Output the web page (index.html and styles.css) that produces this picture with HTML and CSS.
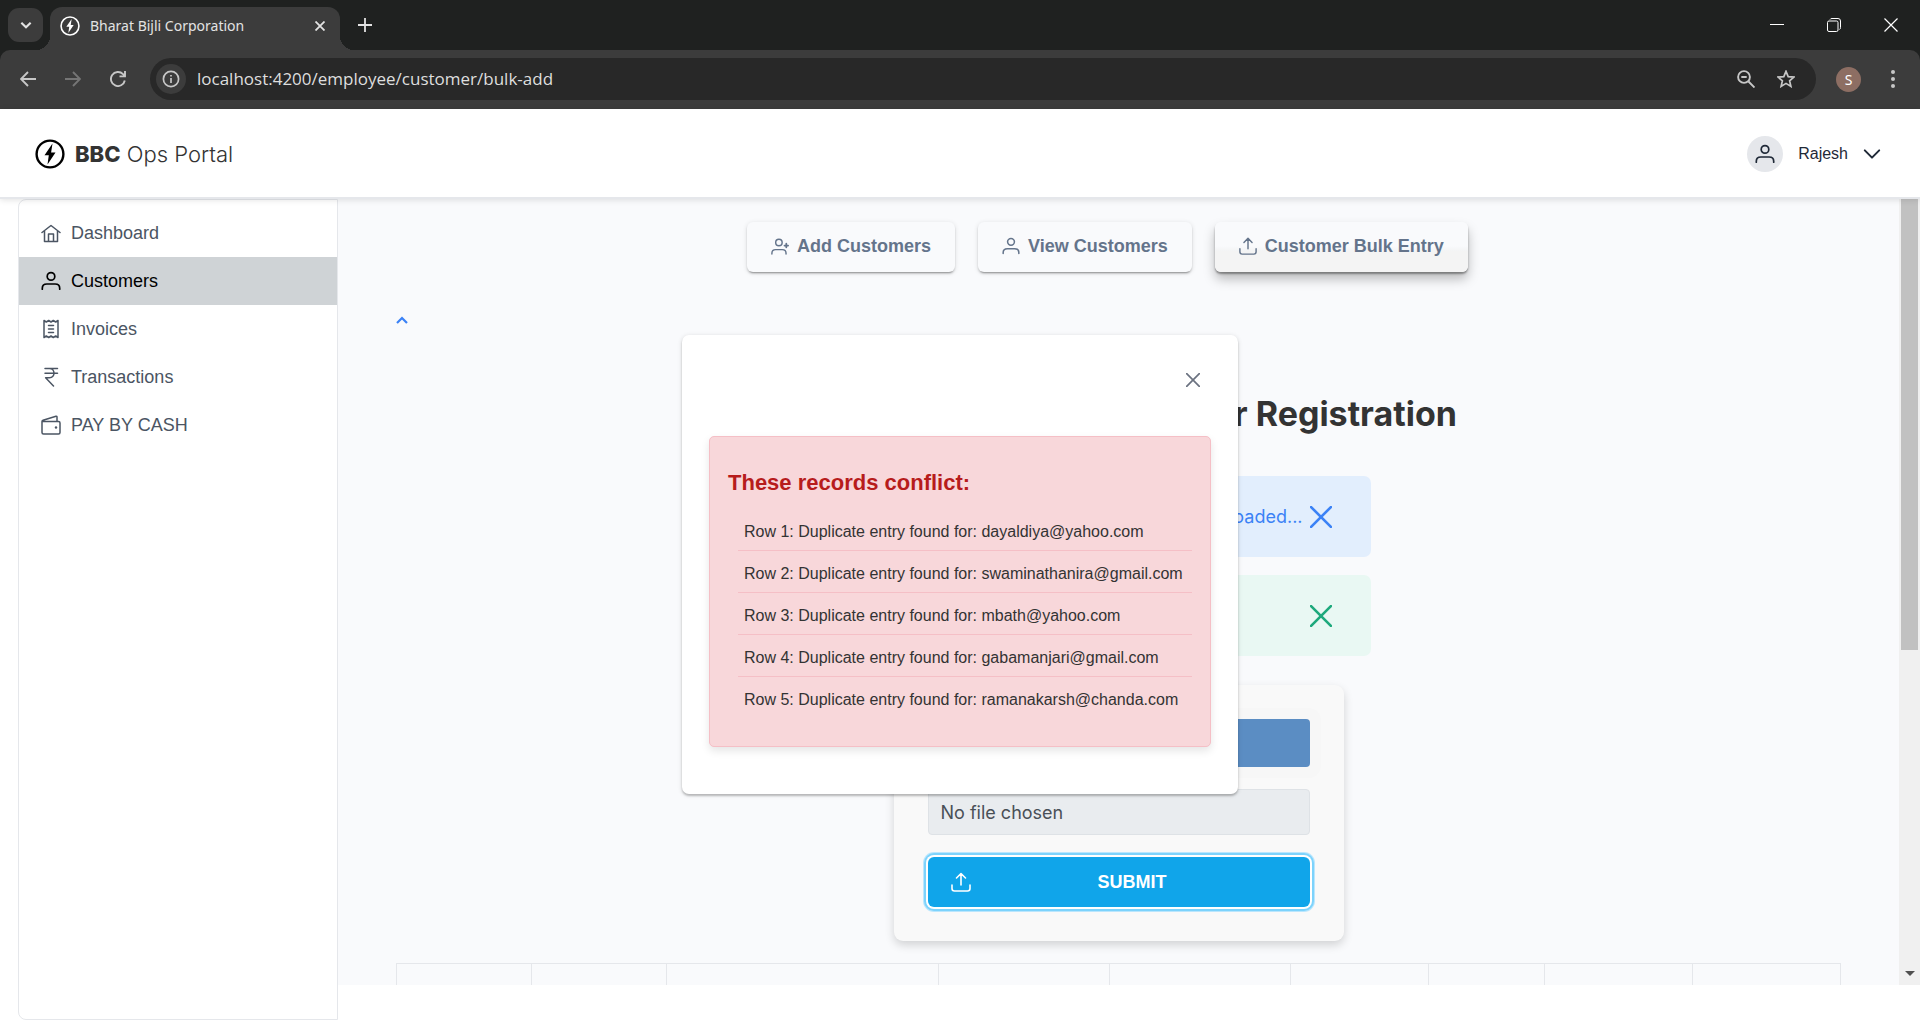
FILE: index.html
```html
<!DOCTYPE html>
<html lang="en">
<head>
<meta charset="utf-8">
<meta name="viewport" content="width=device-width, initial-scale=1">
<title>Bharat Bijli Corporation</title>
<link rel="stylesheet" href="styles.css">
</head>
<body>
<svg class="sprite" aria-hidden="true">
  <symbol id="bolt" viewBox="0 0 30 30"><circle cx="15" cy="15" r="13.4" fill="none" stroke="currentColor" stroke-width="2.4"/><path d="M17.500 4.500 9.500 16.200h4.300l-1.300 9.300L20.500 13.500h-4.400z" fill="currentColor"/></symbol>
  <symbol id="user" viewBox="0 0 20 20"><g fill="none" stroke="currentColor" stroke-width="1.700" stroke-linecap="round"><circle cx="10" cy="5.400" r="3.800"/><path d="M1.300 18.200v-1c0-2.600 2-4.200 4.600-4.200h8.200c2.600 0 4.600 1.600 4.600 4.200v1"/></g></symbol>
  <symbol id="user-plus" viewBox="0 0 20 20"><g fill="none" stroke="currentColor" stroke-width="1.600" stroke-linecap="round"><circle cx="8.800" cy="6.200" r="3.600"/><path d="M1 19v-1c0-2.500 1.800-4 4.200-4h7.300c2.400 0 4.200 1.500 4.200 4v1"/><path d="M17 7.500v4M15 9.500h4" stroke-width="2"/></g></symbol>
  <symbol id="upload" viewBox="0 0 20 20"><path d="M1 13v3.500C1 18 2 19 3.500 19h13c1.500 0 2.500-1 2.500-2.500V13M10 13V1.500M5.500 6 10 1.500 14.500 6" fill="none" stroke="currentColor" stroke-width="1.600" stroke-linecap="round" stroke-linejoin="round"/></symbol>
  <symbol id="cross" viewBox="0 0 20 20"><path d="M1 1 19 19M19 1 1 19" fill="none" stroke="currentColor" stroke-width="2.400" stroke-linecap="round"/></symbol>
  <symbol id="chevron" viewBox="0 0 20 20"><path d="M2 6l8 8 8-8" fill="none" stroke="currentColor" stroke-width="2.200" stroke-linecap="round" stroke-linejoin="round"/></symbol>
</svg>

<div class="browser">
  <div class="tabs">
    <button class="tab-search" aria-label="Search tabs"><svg viewBox="0 0 12 12"><path d="M2 4l4 4 4-4" fill="none" stroke="currentColor" stroke-width="1.800"/></svg></button>
    <div class="tab">
      <svg class="favicon"><use href="#bolt"/></svg>
      <span class="tab-title">Bharat Bijli Corporation</span>
      <button class="icon-btn" aria-label="Close tab"><svg class="s10" viewBox="0 0 10 10"><path d="M.5.5l9 9M9.500.5l-9 9" stroke="currentColor" stroke-width="1.800"/></svg></button>
    </div>
    <button class="icon-btn new-tab" aria-label="New tab"><svg class="s14" viewBox="0 0 14 14"><path d="M7 0v14M0 7h14" stroke="currentColor" stroke-width="1.800"/></svg></button>
    <div class="window-controls">
      <button class="icon-btn" aria-label="Minimize"><svg class="s14" viewBox="0 0 14 14"><path d="M0 6.500h14" stroke="currentColor"/></svg></button>
      <button class="icon-btn" aria-label="Restore"><svg class="s14" viewBox="0 0 14 14"><path d="M.5 4.500a1.500 1.500 0 0 1 1.500-1.500h7.500a1.500 1.500 0 0 1 1.500 1.500V12a1.500 1.500 0 0 1-1.500 1.500H2A1.500 1.500 0 0 1 .5 12zM3 1.500Q3.500.5 5 .5h6Q13.500.5 13.500 3v6.500q0 1.500-1 2" fill="none" stroke="currentColor"/></svg></button>
      <button class="icon-btn" aria-label="Close"><svg class="s14" viewBox="0 0 14 14"><path d="M.5.5l13 13M13.500.5l-13 13" stroke="currentColor" stroke-width="1.200"/></svg></button>
    </div>
  </div>
  <div class="toolbar">
    <button class="icon-btn" aria-label="Back"><svg class="s16" viewBox="0 0 16 16"><path d="M16 8H1.500M8 1 1 8l7 7" fill="none" stroke="currentColor" stroke-width="1.900"/></svg></button>
    <button class="icon-btn dim" aria-label="Forward"><svg class="s16" viewBox="0 0 16 16"><path d="M0 8h14.500M8 1l7 7-7 7" fill="none" stroke="currentColor" stroke-width="1.900"/></svg></button>
    <button class="icon-btn" aria-label="Reload"><svg class="s16" viewBox="0 0 16 16"><path d="M14.800 9.500A7 7 0 1 1 13 3.200L15 5.200M15 0v5.400H9.500" fill="none" stroke="currentColor" stroke-width="1.900"/></svg></button>
    <div class="address">
      <button class="site-info" aria-label="Site information"><svg viewBox="0 0 18 18"><circle cx="9" cy="9" r="7.600" fill="none" stroke="currentColor" stroke-width="1.700"/><path d="M9 8v5M9 5v1.600" stroke="currentColor" stroke-width="1.700"/></svg></button>
      <input class="url" type="text" aria-label="Address" value="localhost:4200/employee/customer/bulk-add">
      <button class="icon-btn" aria-label="Zoom"><svg class="s18" viewBox="0 0 18 18"><circle cx="7" cy="7" r="5.900" fill="none" stroke="currentColor" stroke-width="1.900"/><path d="M11.500 11.500l6 6M4.300 7h5.400" stroke="currentColor" stroke-width="1.900"/></svg></button>
      <button class="icon-btn" aria-label="Bookmark"><svg class="s18" viewBox="0 0 18 18"><path d="M9 1.300l2.200 5.300 5.700.5-4.300 3.700 1.300 5.600L9 13.400l-4.900 3 1.300-5.600L1.100 7.100l5.700-.5z" fill="none" stroke="currentColor" stroke-width="1.700"/></svg></button>
    </div>
    <button class="profile" aria-label="Profile">S</button>
    <button class="icon-btn" aria-label="Menu"><svg class="s18" viewBox="0 0 18 18"><g fill="currentColor"><circle cx="9" cy="2" r="2"/><circle cx="9" cy="9" r="2"/><circle cx="9" cy="16" r="2"/></g></svg></button>
  </div>
</div>

<div class="page">
  <header class="header">
    <a class="brand" href="#"><svg class="logo"><use href="#bolt"/></svg><span><strong>BBC</strong> Ops Portal</span></a>
    <button class="account"><span class="avatar"><svg class="s20"><use href="#user"/></svg></span>Rajesh<svg class="s18"><use href="#chevron"/></svg></button>
  </header>

  <div class="body">
    <nav class="sidebar">
      <a class="nav-item" href="#"><svg class="s20" viewBox="0 0 20 20"><path d="M1 9.500 10 2.500l9 7M3.500 8v10.500h13V8M7.500 18.500v-7.500h5v7.500" fill="none" stroke="currentColor" stroke-width="1.500" stroke-linecap="round" stroke-linejoin="round"/></svg>Dashboard</a>
      <a class="nav-item active" href="#" aria-current="page"><svg class="s20"><use href="#user"/></svg>Customers</a>
      <a class="nav-item" href="#"><svg class="s20" viewBox="0 0 20 20"><path d="M3 1.500l2.300 1.500L7.700 1.500 10 3l2.300-1.500L14.700 3 17 1.500v17L14.700 17l-2.400 1.500L10 17l-2.300 1.500L5.300 17 3 18.500zM7.500 6.500h5M7.500 10h5M7.500 13.500h5" fill="none" stroke="currentColor" stroke-width="1.500" stroke-linecap="round" stroke-linejoin="round"/></svg>Invoices</a>
      <a class="nav-item" href="#"><svg class="s20" viewBox="0 0 20 20"><path d="M4 1.500h12.500M4 6.200h12.500M4 1.500h4.500c6 0 6 9.300 0 9.300H4.600L12.500 19" fill="none" stroke="currentColor" stroke-width="1.500" stroke-linecap="round" stroke-linejoin="round"/></svg>Transactions</a>
      <a class="nav-item" href="#"><svg class="s20" viewBox="0 0 20 20"><path d="M1 6.500h16.500q1.500 0 1.500 1.500v9.500q0 1.500-1.500 1.500h-15Q1 19 1 17.500V6.500q0-1 1-1.300L15 1.200q1-.2 1 .8v4.500" fill="none" stroke="currentColor" stroke-width="1.500" stroke-linejoin="round"/><circle cx="15" cy="12.500" r="1.200" fill="currentColor"/></svg>PAY BY CASH</a>
    </nav>

    <main class="main">
      <div class="content">
        <div class="actions">
          <button class="action"><svg class="s18"><use href="#user-plus"/></svg>Add Customers</button>
          <button class="action"><svg class="s18"><use href="#user"/></svg>View Customers</button>
          <button class="action current"><svg class="s18"><use href="#upload"/></svg>Customer Bulk Entry</button>
        </div>
        <button class="collapse" aria-label="Collapse"><svg viewBox="0 0 12 12"><path d="M1 9l5-5 5 5" fill="none" stroke="currentColor" stroke-width="2.200"/></svg></button>
        <h1 class="title">Upload Details for Customer Registration</h1>
        <div class="message info"><span>Your file is being uploaded...</span><button class="icon-btn" aria-label="Dismiss"><svg class="s22"><use href="#cross"/></svg></button></div>
        <div class="message success"><button class="icon-btn" aria-label="Dismiss"><svg class="s22"><use href="#cross"/></svg></button></div>
        <form class="upload">
          <button class="choose" type="button">Choose File</button>
          <input class="file-name" type="text" aria-label="Selected file" value="No file chosen" readonly>
          <button class="submit" type="button"><svg class="s20"><use href="#upload"/></svg><span>SUBMIT</span></button>
        </form>
        <table class="records">
          <colgroup><col class="w135"><col class="w135"><col class="w272"><col class="w171"><col class="w181"><col class="w138"><col class="w116"><col class="w148"><col class="w148"></colgroup>
          <tbody><tr><td></td><td></td><td></td><td></td><td></td><td></td><td></td><td></td><td></td></tr></tbody>
        </table>
      </div>
      <div class="scrollbar" aria-hidden="true"><div class="thumb"></div><svg class="down" viewBox="0 0 10 5"><path d="M0 0h10L5 5z" fill="#505050"/></svg></div>
    </main>
  </div>

  <div class="overlay">
    <section class="dialog" role="dialog" aria-labelledby="conflict-title">
      <button class="dialog-close" aria-label="Close"><svg class="s14"><use href="#cross"/></svg></button>
      <div class="alert">
        <h2 class="alert-title" id="conflict-title">These records conflict:</h2>
        <ul class="conflicts">
          <li>Row 1: Duplicate entry found for: dayaldiya@yahoo.com</li>
          <li>Row 2: Duplicate entry found for: swaminathanira@gmail.com</li>
          <li>Row 3: Duplicate entry found for: mbath@yahoo.com</li>
          <li>Row 4: Duplicate entry found for: gabamanjari@gmail.com</li>
          <li>Row 5: Duplicate entry found for: ramanakarsh@chanda.com</li>
        </ul>
      </div>
    </section>
  </div>
</div>
</body>
</html>
```
FILE: styles.css
```css
* { box-sizing: border-box; }
body {
  margin: 0;
  height: 100vh;
  display: flex;
  flex-direction: column;
  overflow: hidden;
  background: #fff;
  font-family: "Liberation Sans", Arial, sans-serif;
  color: #333;
}
button { margin: 0; padding: 0; border: 0; background: none; color: inherit; font: inherit; }
a { color: inherit; text-decoration: none; }
svg { display: block; flex: none; }
.sprite { width: 0; height: 0; position: absolute; }
.s10 { width: 10px; height: 10px; }
.s14 { width: 14px; height: 14px; }
.s16 { width: 16px; height: 16px; }
.s18 { width: 18px; height: 18px; }
.s20 { width: 20px; height: 20px; }
.s22 { width: 22px; height: 22px; }

/* Browser frame */
.browser { background: #1f2120; color: #e3e3e3; font-family: "Noto Sans", "Open Sans", sans-serif; }
.tabs { display: flex; align-items: center; height: 50px; padding-left: 8px; }
.tab-search { width: 35px; height: 34px; border-radius: 11px; background: #3c3c3c; display: grid; place-items: center; }
.tab-search svg { width: 14px; height: 14px; }
.tab {
  position: relative;
  align-self: flex-end;
  display: flex;
  align-items: center;
  width: 290px;
  height: 43px;
  margin-left: 7px;
  padding: 0 15px 6px 10px;
  border-radius: 12px 12px 0 0;
  background: #3c3c3c;
}
.tab::before, .tab::after { content: ""; position: absolute; bottom: 0; width: 14px; height: 14px; }
.tab::before { right: 100%; background: radial-gradient(circle at 0 0, transparent 14px, #3c3c3c 14px); }
.tab::after { left: 100%; background: radial-gradient(circle at 100% 0, transparent 14px, #3c3c3c 14px); }
.favicon { width: 20px; height: 20px; color: #fff; }
.tab-title { flex: 1; padding-left: 10px; font-size: 14px; line-height: 20px; white-space: nowrap; }
.icon-btn { display: grid; place-items: center; }
.new-tab { margin-left: 18px; }
.window-controls { display: flex; gap: 43px; margin-left: auto; padding-right: 22px; color: #fff; }
.toolbar {
  display: flex;
  align-items: center;
  height: 59px;
  padding: 0 18px 1px 20px;
  gap: 29px;
  border-radius: 10px 10px 0 0;
  background: #3c3c3c;
  color: #c7c7c7;
}
.dim { color: #757575; }
.address {
  flex: 1;
  display: flex;
  align-items: center;
  gap: 22px;
  height: 42px;
  margin-left: -5px;
  padding: 0 21px 0 6px;
  border-radius: 21px;
  background: #282828;
}
.site-info { width: 30px; height: 30px; border-radius: 50%; background: #3c3c3c; display: grid; place-items: center; }
.site-info svg { width: 18px; height: 18px; }
.url { flex: 1; min-width: 0; margin-left: -11px; padding: 0; border: 0; background: none; color: #dedede; font: 17px/24px "Open Sans", "Noto Sans", sans-serif; }
.profile { width: 25px; height: 25px; border-radius: 50%; background: #8d6e63; color: #fff; font-size: 14px; line-height: 25px; margin: 0 -6px 0 -9px; }

/* Page */
.page { flex: 1; min-height: 0; display: flex; flex-direction: column; position: relative; }
.header {
  display: flex;
  align-items: center;
  justify-content: space-between;
  height: 90px;
  padding: 1px 39px 0 35px;
  border-bottom: 2px solid #e5e7eb;
  box-shadow: 0 1px 6px rgba(0, 0, 0, .12);
  position: relative;
  background: #fff;
}
.brand { display: flex; align-items: center; gap: 10px; font: 300 22px/32px Inter, sans-serif; }
.brand strong { font-weight: 800; }
.logo { width: 30px; height: 30px; color: #000; }
.account { display: flex; align-items: center; gap: 15px; font-size: 16px; color: #1f2937; }
.avatar { width: 36px; height: 36px; border-radius: 50%; background: #e5e7eb; display: grid; place-items: center; }
.body { flex: 1; min-height: 0; display: flex; }
.sidebar { width: 320px; margin-left: 18px; padding-top: 9px; border: 1px solid #e5e7eb; border-radius: 8px 0 0 8px; }
.nav-item { display: flex; align-items: center; gap: 10px; height: 48px; padding-left: 22px; font-size: 18px; color: #4b5563; }
.nav-item.active { background: #cfd3d6; color: #000; }

.main { flex: 1; min-width: 0; margin-bottom: 35px; display: flex; overflow: hidden; background: #f9fafc; }
.content { flex: 1; min-width: 0; display: flex; flex-direction: column; align-items: center; padding: 23px 58px 0; }
.actions { display: flex; gap: 23px; flex: none; margin-right: 22px; }
.action {
  display: flex;
  align-items: center;
  gap: 8px;
  height: 50px;
  padding: 0 24px 2px;
  border-radius: 6px;
  font-size: 18px;
  font-weight: 700;
  color: #64748b;
  box-shadow: 0 3px 1px -2px rgba(0, 0, 0, .2), 0 2px 2px rgba(0, 0, 0, .14), 0 1px 5px rgba(0, 0, 0, .12);
  background: #f9fafc;
}
.action.current {
  background: linear-gradient(#f9fafc 48%, #f3f4f5 58%, #f4f4f4 58%);
  box-shadow: 0 2px 2px rgba(0, 0, 0, .36), 0 7px 12px rgba(0, 0, 0, .26);
}
.collapse { align-self: flex-start; margin-top: 42px; color: #3b82f6; }
.collapse svg { width: 12px; height: 12px; }
.title { flex: none; margin: 66px 0 40px; font: 700 34px/44px Inter, sans-serif; color: #333; white-space: nowrap; }
.message {
  flex: none;
  display: flex;
  align-items: center;
  justify-content: flex-end;
  gap: 7px;
  width: 504px;
  height: 81px;
  padding-right: 39px;
  margin-bottom: 18px;
  border-radius: 7px;
  font: 18px/24px Inter, sans-serif;
}
.info { background: #e2eefd; color: #3b82f6; }
.success { background: #e9f8f3; color: #1ea97c; }
.upload {
  flex: none;
  display: flex;
  flex-direction: column;
  gap: 22px;
  width: 450px;
  margin: 11px 0 22px;
  padding: 34px;
  border-radius: 9px;
  background: #f9f9f9;
  box-shadow: 0 4px 10px rgba(0, 0, 0, .16);
}
.choose { height: 48px; border-radius: 4px; background: #5b8dc3; color: #fff; font-size: 18px; box-shadow: 0 0 0 11px #f7f7f7; }
.file-name { position: relative; height: 46px; padding: 0 12px; border: 1px solid #dee2e6; border-radius: 4px; background: #e9ecef; color: #495057; font: 18px/24px Inter, sans-serif; }
.submit {
  display: flex;
  align-items: center;
  height: 50px;
  padding: 0 24px 0 23px;
  border-radius: 6px;
  background: #10a5ea;
  color: #fff;
  font-size: 18px;
  font-weight: 700;
  box-shadow: 0 0 0 2px #fff, 0 0 0 4px #7dd3fc, 0 0 0 5px #bae6fd;
}
.submit span { flex: 1; padding-left: 8px; }
.records { flex: none; width: 100%; table-layout: fixed; border-collapse: collapse; }
.records td { height: 60px; border: 1px solid #e5e7eb; }
.w116 { width: 116px; }
.w135 { width: 135px; }
.w138 { width: 138px; }
.w148 { width: 148px; }
.w171 { width: 171px; }
.w181 { width: 181px; }
.w272 { width: 272px; }
.scrollbar { width: 21px; flex: none; padding: 0 2px 9px; background: #f0f0f0; display: flex; flex-direction: column; justify-content: space-between; }
.thumb { height: 58%; width: 17px; background: #c1c1c1; }
.down { width: 10px; height: 5px; margin-left: 4px; }

/* Conflict dialog */
.overlay { position: absolute; inset: 0; display: flex; align-items: center; justify-content: center; }
.dialog {
  display: flex;
  flex-direction: column;
  width: 556px;
  padding: 38px 27px 47px;
  border-radius: 7px;
  background: #fff;
  box-shadow: 0 2px 2px rgba(0, 0, 0, .2), 0 1px 5px rgba(0, 0, 0, .14);
}
.dialog-close { align-self: flex-end; margin: 0 11px 49px; color: #6b7280; }
.alert { padding: 33px 18px 28px; border: 1px solid #f5bfc6; border-radius: 5px; background: #f8d7da; box-shadow: 0 4px 8px rgba(0, 0, 0, .1); }
.alert-title { margin: 0 0 13px; font-size: 22px; line-height: 26px; color: #b71c1c; }
.conflicts { margin: 0; padding: 0 0 0 10px; list-style: none; font-size: 16px; line-height: 23px; white-space: nowrap; }
.conflicts li { padding: 11px 6px 7px; border-bottom: 1px solid #f5bfc6; }
.conflicts li:last-child { border-bottom: 0; }
```
